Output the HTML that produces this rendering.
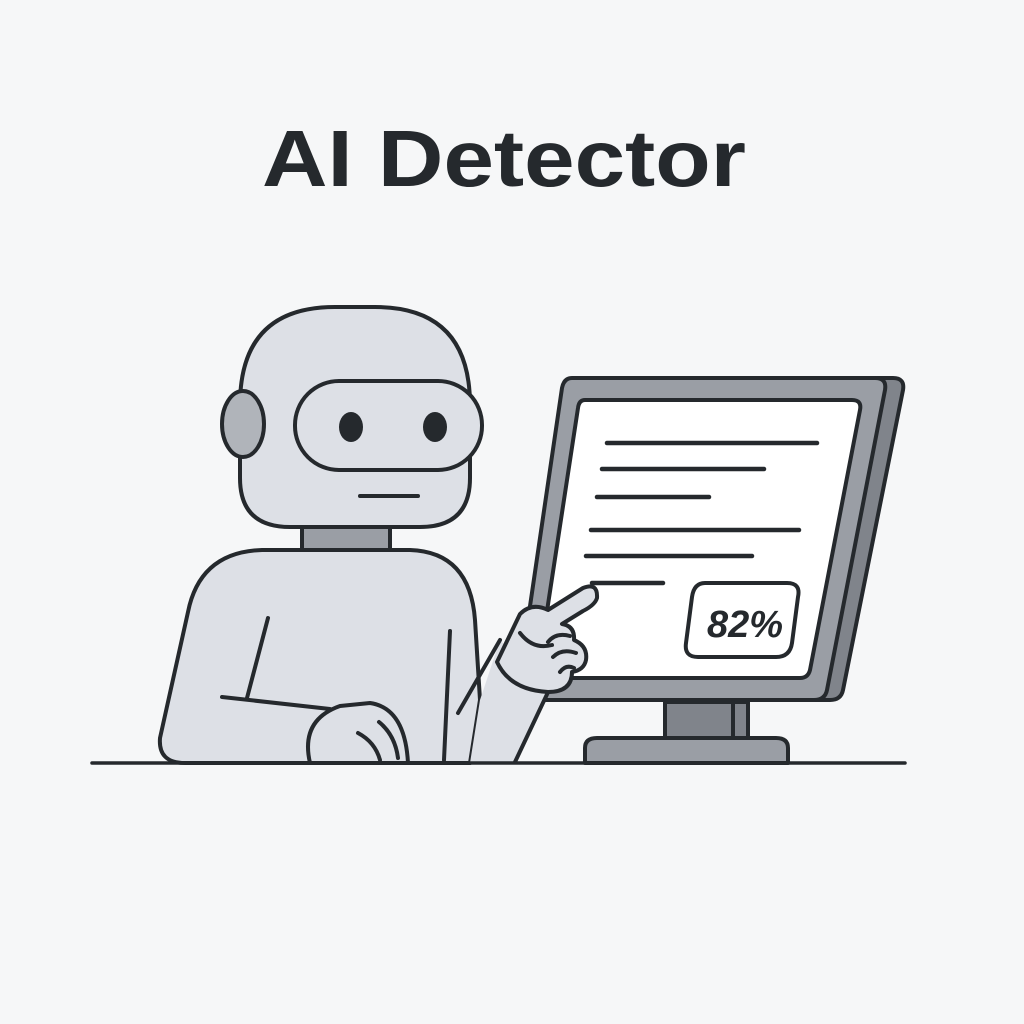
<!DOCTYPE html>
<html><head><meta charset="utf-8"><style>
html,body{margin:0;padding:0;background:#f6f7f8;}
svg{display:block;}
</style></head><body>
<svg width="1024" height="1024" viewBox="0 0 1024 1024" xmlns="http://www.w3.org/2000/svg">
<rect width="1024" height="1024" fill="#f6f7f8"/>
<text x="504" y="186" text-anchor="middle" font-family="Liberation Sans, sans-serif" font-weight="bold" font-size="80" fill="#25292d" textLength="484" lengthAdjust="spacingAndGlyphs">AI Detector</text>
<g stroke="#25292d" stroke-width="4" stroke-linejoin="round" stroke-linecap="round">
<path d="M575,378 L893,378 Q905,378 903,390 L843,690 Q841,700 830,700 L530,700 Z" fill="#80848b"/>
<path d="M572,378 L875,378 Q887,378 885,390 L827,690 Q825,700 814,700 L528,700 Q516,700 518,688 L562,388 Q564,378 572,378 Z" fill="#9a9ea5"/>
<path d="M585,400 L852,400 Q862,400 860,410 L810,670 Q808,678 800,678 L545,678 Q537,678 538,670 L578,408 Q579,400 585,400 Z" fill="#ffffff"/>
<g stroke-width="4.5">
<line x1="607" y1="443" x2="817" y2="443"/>
<line x1="602" y1="469" x2="764" y2="469"/>
<line x1="597" y1="497" x2="709" y2="497"/>
<line x1="591" y1="530" x2="799" y2="530"/>
<line x1="586" y1="556" x2="752" y2="556"/>
<line x1="592" y1="583" x2="663" y2="583"/>
</g>
<path d="M705,583 L787,583 Q801,583 798,597 L792,643 Q790,657 776,657 L698,657 Q684,657 686,643 L692,597 Q694,583 705,583 Z" fill="#ffffff"/>
<rect x="665" y="702" width="83" height="38" fill="#80848b"/>
<line x1="733" y1="702" x2="733" y2="740"/>
<path d="M585,763 L585,748 Q585,738 597,738 L776,738 Q788,738 788,748 L788,763 Z" fill="#9a9ea5"/>
<rect x="302" y="526" width="88" height="26" fill="#9a9ea5"/>
<path d="M160,738 L188,612 Q200,552 262,550 L410,550 Q470,552 475,620 L480,700 L470,763 L185,763 Q158,763 160,738 Z" fill="#dde0e6"/>
<path d="M470,763 L480,700 L500,640 L550,690 L515,762 Z" fill="#dde0e6" stroke="none"/>
<path d="M515,762 L550,688" fill="none"/>
<path d="M458,713 L500,640" fill="none"/>
<path d="M520,614 Q532,602 548,610 L583,588 Q598,582 597,598 Q595,605 583,611 L562,624 Q575,626 574,640 Q588,646 586,660 Q584,670 572,672 Q572,692 548,692 Q510,690 497,662 Z" fill="#dde0e6"/>
<path d="M520,633 Q533,650 552,645" fill="none"/>
<path d="M548,642 Q556,632 570,636" fill="none"/>
<path d="M553,657 Q562,648 576,653" fill="none"/>
<path d="M560,672 Q566,664 574,668" fill="none"/>
<line x1="268" y1="618" x2="247" y2="698"/>
<line x1="222" y1="697" x2="330" y2="709"/>
<line x1="450" y1="631" x2="444" y2="760"/>
<path d="M310,763 Q300,720 340,706 L370,703 Q405,708 408,763 Z" fill="#dde0e6"/>
<path d="M358,733 Q375,742 380,760" fill="none"/>
<path d="M379,722 Q395,735 398,758" fill="none"/>
<path d="M240,405 Q240,307 335,307 L375,307 Q470,307 470,405 L470,478 Q470,527 420,527 L290,527 Q240,527 240,478 Z" fill="#dde0e6"/>
<ellipse cx="243" cy="424" rx="21" ry="33" fill="#b0b4ba"/>
<rect x="295" y="381" width="187" height="89" rx="44" fill="#dde0e6"/>
<line x1="360" y1="496" x2="418" y2="496"/>
<line x1="92" y1="763" x2="905" y2="763" stroke-width="3.5"/>
</g>
<ellipse cx="351" cy="427" rx="12" ry="15" fill="#25292d"/>
<ellipse cx="435" cy="427" rx="12" ry="15" fill="#25292d"/>
<text x="745" y="637" text-anchor="middle" font-family="Liberation Sans, sans-serif" font-weight="bold" font-style="italic" font-size="38" fill="#25292d">82%</text>
</svg>
</body></html>
